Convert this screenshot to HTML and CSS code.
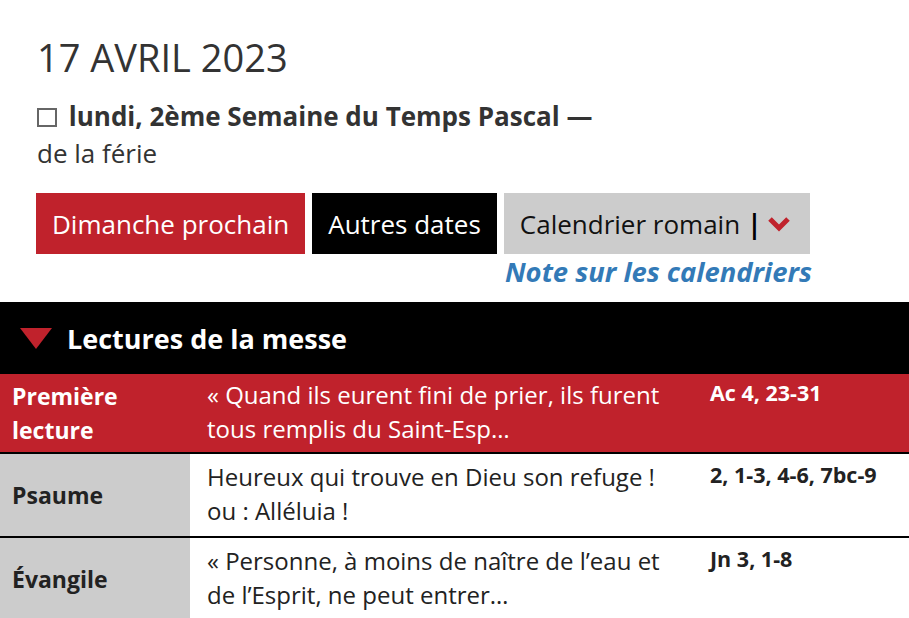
FILE: index.html
```html
<!DOCTYPE html>
<html lang="fr">
<head>
    <meta charset="UTF-8">
    <meta name="viewport" content="width=device-width, initial-scale=1.0">
    <title>17 avril 2023</title>
    <link rel="stylesheet" href="styles.css">
</head>
<body>

    <div class="entete">
        <h1>17 AVRIL 2023</h1>
        <p class="jour"><span class="case"></span> <strong>lundi, 2ème Semaine du Temps Pascal —</strong></p>
        <p class="rang">de la férie</p>

        <div class="boutons">
            <a class="btn rouge" href="#">Dimanche prochain</a>
            <a class="btn noir" href="#">Autres dates</a>
            <a class="btn gris" href="#">Calendrier romain <b class="barre">|</b> <svg class="chevron" width="24" height="16" viewBox="0 0 24 16"><path d="M3 3 L12 12 L21 3" fill="none" stroke="#c0222c" stroke-width="5"/></svg></a>
        </div>
        <div class="note"><a href="#">Note sur les calendriers</a></div>
    </div>

    <!-- lectures -->
    <div class="bloc-titre">
        <span class="triangle"></span>
        <h2>Lectures de la messe</h2>
    </div>

    <div class="lectures">
        <div class="ligne active">
            <div class="nom">Première lecture</div>
            <div class="texte">« Quand ils eurent fini de prier, ils furent tous remplis du Saint-Esp…</div>
            <div class="ref">Ac 4, 23-31</div>
        </div>
        <div class="ligne">
            <div class="nom">Psaume</div>
            <div class="texte">Heureux qui trouve en Dieu son refuge !<br>ou : Alléluia !</div>
            <div class="ref">2, 1-3, 4-6, 7bc-9</div>
        </div>
        <div class="ligne">
            <div class="nom">Évangile</div>
            <div class="texte">« Personne, à moins de naître de l’eau et de l’Esprit, ne peut entrer…</div>
            <div class="ref">Jn 3, 1-8</div>
        </div>
    </div>

</body>
</html>
```

FILE: styles.css
```css
body {
    font-family: 'Open Sans', 'Liberation Sans', sans-serif;
    background-color: #fff;
    color: #333;
    margin: 0;
    padding: 0;
}
a {
    text-decoration: none;
}
.entete {
    padding: 33px 0 0 37px;
}
h1 {
    font-size: 38px;
    font-weight: 400;
    margin: 0;
    line-height: 48px;
}
.jour {
    margin: 18px 0 0;
    font-size: 26px;
    line-height: 34px;
}
.case {
    display: inline-block;
    width: 20px;
    height: 19px;
    border: 2px solid #666;
    box-sizing: border-box;
    vertical-align: -1px;
    margin-right: 5px;
}
.rang {
    margin: 3px 0 0;
    font-size: 26px;
    line-height: 34px;
}
.boutons {
    display: flex;
    gap: 7px;
    margin-top: 23px;
    margin-left: -1px;
}
.btn {
    display: flex;
    align-items: center;
    height: 61px;
    padding: 0 16px;
    font-size: 26px;
    box-sizing: border-box;
}
.rouge {
    background-color: #c0222c;
    color: #fff;
}
.noir {
    background-color: #000;
    color: #fff;
}
.gris {
    background-color: #ccc;
    color: #111;
    padding-right: 19px;
}
.barre {
    margin-left: 7px;
    color: #000;
}
.chevron {
    margin-left: 6px;
}
.note {
    width: 775px;
    text-align: right;
    line-height: 36px;
}
.note a {
    color: #337ab7;
    font-weight: 700;
    font-style: italic;
    font-size: 27.4px;
}
.bloc-titre {
    background-color: #000;
    color: #fff;
    display: flex;
    align-items: center;
    height: 72px;
    margin-top: 8px;
    padding-left: 20px;
}
.triangle {
    width: 0;
    height: 0;
    border-left: 16px solid transparent;
    border-right: 16px solid transparent;
    border-top: 21px solid #c0222c;
    margin-right: 15px;
}
h2 {
    margin: 0;
    font-size: 27px;
    font-weight: 700;
}
.ligne {
    display: grid;
    grid-template-columns: 190px 520px 1fr;
    border-bottom: 2px solid #000;
    font-size: 24px;
    line-height: 34px;
}
.nom {
    background-color: #ccc;
    font-weight: 700;
    font-size: 23px;
    padding: 0 12px;
    display: flex;
    align-items: center;
    color: #222;
}
.texte {
    padding: 6px 33px 8px 17px;
    color: #222;
}
.ref {
    padding-top: 4px;
    font-weight: 700;
    font-size: 21.5px;
    color: #222;
}
.active {
    background-color: #c0222c;
}
.active .nom {
    background-color: #c0222c;
}
.active .texte {
    padding-top: 4px;
    padding-bottom: 6px;
}
.active .ref {
    padding-top: 2px;
}
.active .nom, .active .texte, .active .ref {
    color: #fff;
}
```
